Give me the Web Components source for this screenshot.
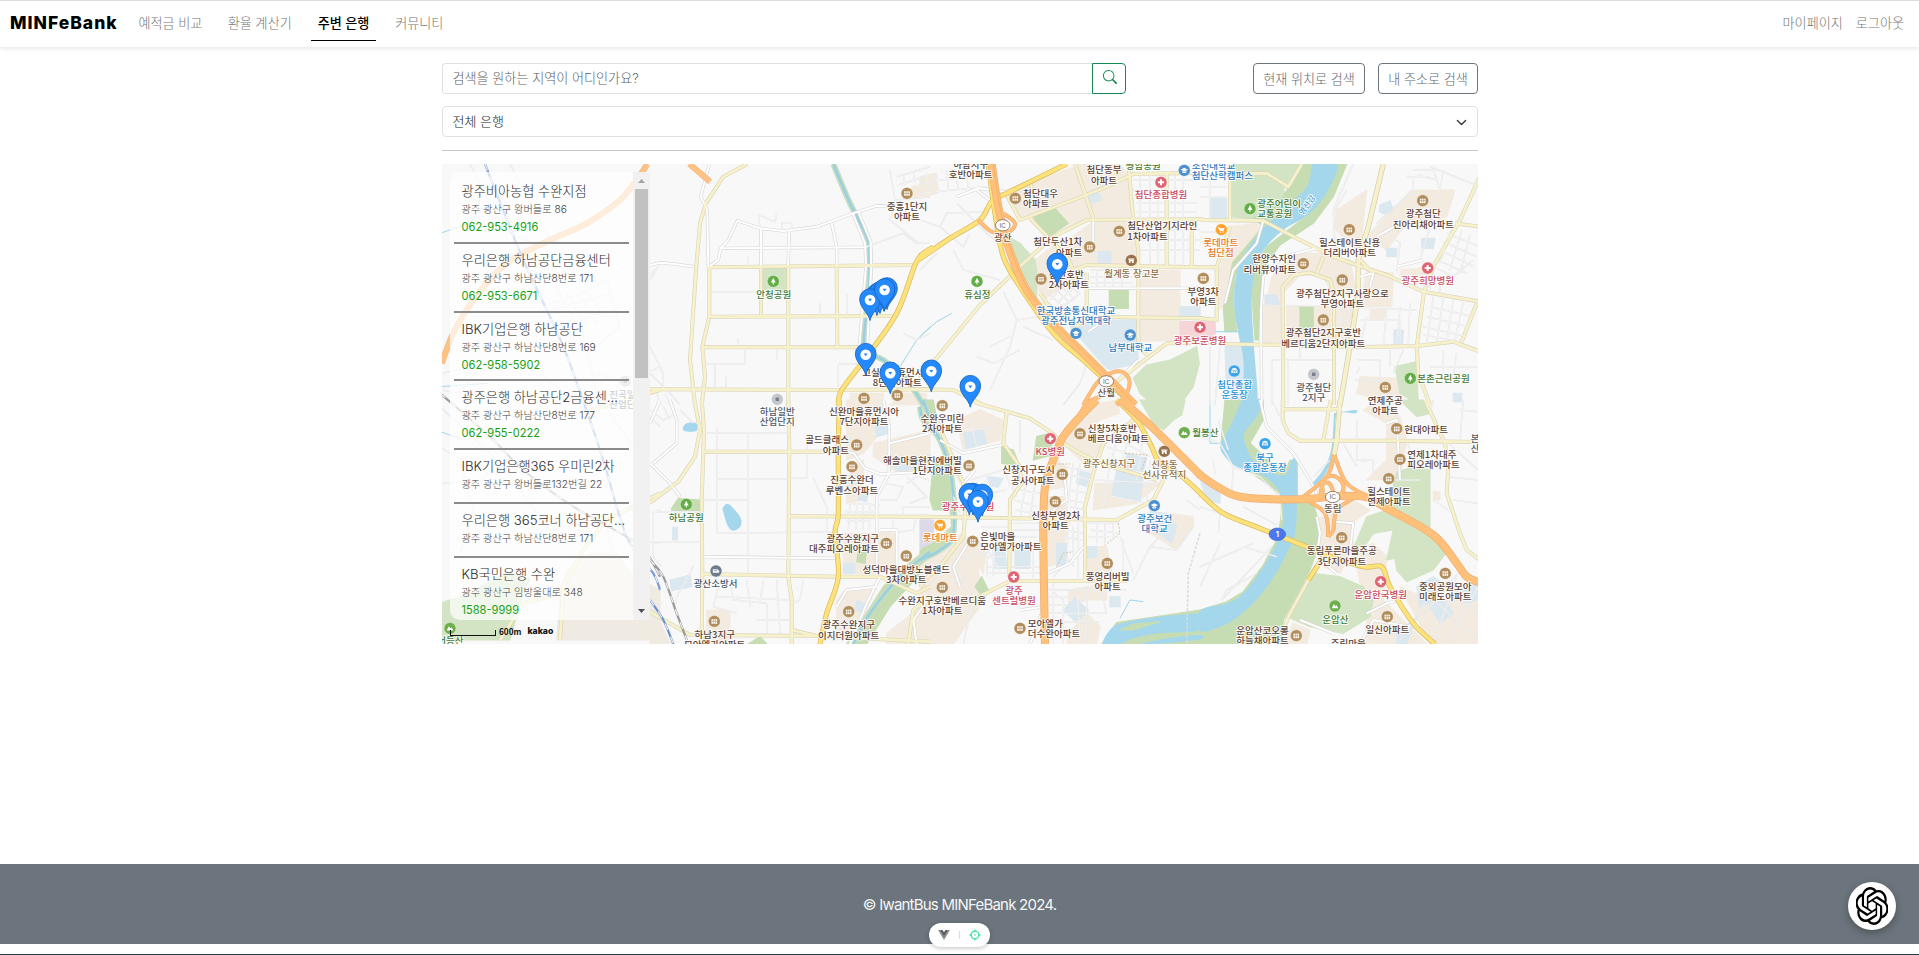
<!DOCTYPE html>
<html lang="ko">
<head>
<meta charset="utf-8">
<title>MINFeBank</title>
<style>
html,body{margin:0;height:100%}
body{font-family:Inter,"Noto Sans CJK KR",sans-serif;font-size:13px;color:#212529;background:#fff;overflow:hidden}
</style>
</head>
<body>
<bank-app></bank-app>
<script>
function define(name, html, setup, connected) {
  const t = document.createElement('template');
  t.innerHTML = html;
  customElements.define(name, class extends HTMLElement {
    constructor() {
      super();
      this.attachShadow({mode: 'open'}).append(t.content.cloneNode(true));
      if (setup) setup(this.shadowRoot);
    }
    connectedCallback() {
      if (connected) connected(this.shadowRoot, this);
    }
  });
}

define('nav-link', `<style>
:host{display:flex;align-items:center;justify-content:center;box-sizing:border-box;height:37px;padding:0 6px;color:#757575;font-weight:300;font-size:13.1px;white-space:nowrap;border-bottom:1px solid transparent}
:host([active]){color:#000;font-weight:500;border-bottom-color:#000;padding:0 6.500px}
</style><span><slot></slot></span>`);

define('top-nav', `<style>
:host{display:flex;align-items:flex-start;box-sizing:border-box;height:47px;border-top:1px solid #dcdcdc;padding:3px 9px 0 10px;background:#fff;box-shadow:0 2px 4px rgba(0,0,0,.09)}
.brand{font:800 17.500px/38px Inter,sans-serif;color:#000;width:109px;margin-right:13.500px;white-space:nowrap;letter-spacing:1px}
nav{display:flex;gap:13.4px}
.user{margin-left:auto;gap:1px}
</style>
<div class="brand">MINFeBank</div>
<nav><nav-link>예적금 비교</nav-link><nav-link>환율 계산기</nav-link><nav-link active>주변 은행</nav-link><nav-link>커뮤니티</nav-link></nav>
<nav class="user"><nav-link>마이페이지</nav-link><nav-link>로그아웃</nav-link></nav>`);

define('outline-button', `<style>
:host{display:flex;align-items:center;justify-content:center;box-sizing:border-box;height:31px;padding:0 10px 1px;border:1px solid #6c757d;border-radius:4px;color:#5f6870;font-weight:300;font-size:13.1px;white-space:nowrap}
</style><slot></slot>`);

define('search-row', `<style>
:host{display:flex;align-items:center;height:31px}
.field{display:flex;width:684px;height:31px;box-sizing:border-box}
.input{flex:1;box-sizing:border-box;border:1px solid #dee2e6;border-right:0;border-radius:4px 0 0 4px;padding-left:9.500px;line-height:28px;color:#5d6267;font-weight:300;font-size:13.1px}
.go{box-sizing:border-box;width:34px;border:1px solid #198754;border-radius:0 4px 4px 0;display:flex;justify-content:center;padding:6px 0 0 1px}
outline-button:nth-of-type(1){margin-left:auto;margin-right:13px;width:112px}
outline-button:nth-of-type(2){width:100px}
</style>
<div class="field"><div class="input">검색을 원하는 지역이 어디인가요?</div>
<div class="go"><svg width="14" height="14" viewBox="0 0 16 16" fill="#198754"><path d="M11.742 10.344a6.5 6.5 0 1 0-1.397 1.398h-.001q.044.06.098.115l3.85 3.85a1 1 0 0 0 1.415-1.414l-3.85-3.85a1 1 0 0 0-.115-.1zM12 6.5a5.5 5.5 0 1 1-11 0 5.5 5.5 0 0 1 11 0"/></svg></div></div>
<outline-button>현재 위치로 검색</outline-button><outline-button>내 주소로 검색</outline-button>`);

define('bank-select', `<style>
:host{display:flex;align-items:center;justify-content:space-between;box-sizing:border-box;height:31px;border:1px solid #dee2e6;border-radius:4px;padding:0 10px 2px 9.500px;font-weight:300;font-size:13px;margin-top:12px}
</style><slot></slot><svg width="11" height="11" viewBox="0 0 16 16" style="margin-top:4px"><path d="m2 5 6 6 6-6" fill="none" stroke="#343a40" stroke-width="2" stroke-linecap="round" stroke-linejoin="round"/></svg>`);

define('bank-item', `<style>
:host{display:block;box-sizing:border-box;border-bottom:2px solid #8b8b8b;padding:6px 0 0 7.500px;height:54px;font-weight:300;white-space:nowrap}
:host([tel]){height:68.8px}
.t{font-size:13.2px;line-height:20px;color:#2c2c2c}
.a{font-size:10.2px;line-height:17px;color:#444}
.p{font-size:11.1px;line-height:18px;color:#16a016;font-weight:400}
</style><div class="t"><slot></slot></div><div class="a"></div><div class="p"></div>`, null, (root, el) => {
  root.querySelector('.a').textContent = el.getAttribute('addr');
  root.querySelector('.p').textContent = el.getAttribute('tel') || '';
});

define('bank-list', `<style>
:host{display:flex;width:200px;height:448px;border-radius:10px 0 0 10px;background:rgba(255,255,255,.7);overflow:hidden}
.items{flex:1;padding:3px 4px 0;overflow:hidden}
.bar{width:17px;background:#f1f1f1;display:flex;flex-direction:column;align-items:center}
.thumb{width:13px;height:189px;background:#c1c1c1}
.bar svg{height:17px;width:17px;flex:none}
.down{margin-top:auto}
</style>
<div class="items">
<bank-item addr="광주 광산구 왕버들로 86" tel="062-953-4916">광주비아농협 수완지점</bank-item>
<bank-item addr="광주 광산구 하남산단8번로 171" tel="062-953-6671">우리은행 하남공단금융센터</bank-item>
<bank-item addr="광주 광산구 하남산단8번로 169" tel="062-958-5902">IBK기업은행 하남공단</bank-item>
<bank-item addr="광주 광산구 하남산단8번로 177" tel="062-955-0222">광주은행 하남공단2금융센...</bank-item>
<bank-item addr="광주 광산구 왕버들로132번길 22">IBK기업은행365 우미린2차</bank-item>
<bank-item addr="광주 광산구 하남산단8번로 171">우리은행 365코너 하남공단...</bank-item>
<bank-item addr="광주 광산구 임방울대로 348" tel="1588-9999">KB국민은행 수완</bank-item>
</div>
<div class="bar"><svg viewBox="0 0 17 17"><path d="M5 11 8.500 7 12 11z" fill="#a3a3a3"/></svg><div class="thumb"></div><svg class="down" viewBox="0 0 17 17"><path d="M5 6 8.500 10 12 6z" fill="#505050"/></svg></div>`);

/* Sheet origins: every shape below is given in thirds of a pixel from the origin of its sheet. */
const SHEET = {L: [440,160], A: [650,160], B: [920,160], C: [1200,160], D: [650,400], E: [920,400], F: [1200,400]};
const pt = (s, x, y) => [+(SHEET[s][0] + x / 3).toFixed(1), +(SHEET[s][1] + y / 3).toFixed(1)];
const list = (s, str) => str.trim().split(/\s+/).map(p => pt(s, ...p.split(',').map(Number)));
const pts = (s, str) => list(s, str).map(p => p.join(',')).join(' ');
function curve(s, str) {
  const p = list(s, str);
  let d = 'M' + p[0];
  for (let i = 0; i < p.length - 1; i++) {
    const a = p[i - 1] || p[i], b = p[i], c = p[i + 1], e = p[i + 2] || c;
    d += `C${(b[0] + (c[0] - a[0]) / 6).toFixed(1)},${(b[1] + (c[1] - a[1]) / 6).toFixed(1)} ${(c[0] - (e[0] - b[0]) / 6).toFixed(1)},${(c[1] - (e[1] - b[1]) / 6).toFixed(1)} ${c}`;
  }
  return d;
}

const AREAS = `
b B 255,90 460,22 620,40 640,175 500,180 400,230 330,165 300,180
b B 0,50 50,40 50,100 0,115
b B 430,250 520,185 650,180 655,310 500,310 460,330
b B 345,300 410,250 470,330 500,340 400,400 370,420 345,370
b B 655,330 780,330 780,540 660,545
b B 460,12 600,12 620,40 560,80
g B 255,225 300,250 345,300 350,330 350,420 290,370 270,300
k B 340,170 400,140 445,190 380,235
k B 568,390 625,390 625,445 568,445
s B 450,500 490,480 650,480 655,610 570,628 560,625
s B 500,100 530,85 545,120 515,130
s B 500,12 535,12 530,30
s B 535,275 572,275 572,310 535,310
s B 780,440 840,440 840,475 780,475
p B 780,485 885,485 885,520 780,545
g B 640,655 680,615 750,600 830,560 838,610 820,680 780,735 700,735 660,700
g E 660,0 795,0 785,45 760,60 730,90 700,70
g C 90,12 300,12 250,90 265,120 180,180 95,170
k C 300,12 345,12 330,80 250,150 190,205 135,280 105,350 100,420 110,515 75,515 70,440 80,370 100,300 150,240 190,200 160,175 250,110
k C 405,12 440,12 400,110 340,190 240,255 200,310 180,400 175,540 165,540 155,400 165,320 200,260 330,160
b C 90,200 170,190 180,205 100,300 60,330
b C 60,450 55,330 95,300 75,420
b C 205,400 215,350 290,280 360,280 450,300 470,400 400,410 370,350 300,345 250,400 245,550 190,550 190,440
b C 260,440 460,440 450,560 260,550
b C 410,150 500,90 480,290 400,200
b C 635,90 765,90 740,170 690,190 620,190 560,270 500,230
b C 500,330 580,340 575,440 480,440
b C 600,330 700,320 680,380 600,350
b C 510,450 560,450 550,480 510,475
b C 480,650 600,655 600,735 470,700
k C 300,440 340,440 340,510 300,510
g C 585,620 650,605 655,735 600,700
s C 30,115 80,115 80,175 30,175
s C 195,405 230,405 240,435 195,435
s C 540,135 570,122 580,150 560,165 538,155
s C 560,265 590,265 590,290 560,290
s C 665,235 705,235 700,265 665,265
s C 582,510 610,510 608,550 582,550
s C 760,700 785,700 785,725 760,725
s C 75,560 130,560 135,735 80,735
p C 0,485 45,485 45,550 0,550
g A 337,325 412,325 412,395 337,395
b A 785,80 830,70 840,110 790,115
b A 600,700 700,700 700,735 600,735
b D 590,0 700,0 690,100 640,160 590,180
b D 670,130 840,90 840,210 740,215 670,170
b D 710,700 840,600 840,732 710,732
b A 760,700 830,700 830,735 720,735
b D 590,230 640,180 640,300 590,310
b D 580,400 660,400 740,395 740,500 690,520 580,520
b D 560,600 590,565 680,560 640,650 560,720
b D 170,630 240,630 240,732 170,732
k D 65,325 85,295 150,300 150,335 65,332
k D 295,732 330,710 350,732
k D 625,455 650,450 645,490 620,485
s D 60,540 120,525 125,560 65,572
s D 68,382 82,382 82,420 68,420
s D 580,490 615,490 615,520 580,520
s D 620,600 650,615 640,640 615,630
s D 625,280 655,275 650,305 625,300
s D 675,80 720,70 715,100 680,110
s D 720,180 840,165 840,205 740,212
v D 815,360 840,360 840,445 815,445
v E 0,360 40,360 40,430 0,445
k D 840,440 740,520 700,560 590,732 650,732 720,620 840,490
k E 40,180 95,160 110,330 95,400 60,470 0,500 0,450 40,430 95,380 90,330 40,330 30,300
k E 0,0 40,0 50,60 30,60
b E 110,60 180,30 250,60 240,120 130,150
b E 40,90 20,60 60,120 120,200 120,250 70,160
b E 0,500 90,420 130,400 170,460 180,560 200,590 100,732 0,732
b E 380,290 430,290 450,360 420,490 380,500
b E 390,170 440,200 440,260 385,270
b E 510,80 560,130 510,210 430,130 470,60 540,10 590,0 600,40 540,60
b E 525,250 720,250 650,310 520,330
b E 500,440 560,440 580,540 500,540
b E 445,570 560,550 560,600 500,600 445,620
b E 455,690 500,640 540,680 530,732 440,732
b E 740,340 820,350 820,380 770,450 690,400
b E 160,420 200,430 190,520 160,480
k E 350,110 390,100 400,165 340,180
k E 245,140 280,150 300,200 245,190
k E 165,560 185,530 205,570 180,580
s E 130,100 190,90 200,130 140,145
s E 590,210 670,230 660,305 575,285
s E 620,160 680,175 670,215 610,205
s E 475,205 510,220 500,260 470,250
s E 205,230 250,235 235,262 210,258
s E 225,445 255,445 260,505 225,505
s E 285,450 330,450 330,505 285,505
s E 410,430 440,430 440,495 410,495
s E 500,440 530,440 530,470 500,475
s E 465,595 505,630 470,668 430,630
s E 570,590 600,590 600,620 570,620
s E 690,335 740,340 770,380 755,430 700,390
k E 545,732 590,668 840,630 840,732
b F 350,360 460,300 510,330 455,370 460,440 420,520 370,500
b F 490,30 540,0 600,50 620,120 600,240 560,240 500,240 560,180 560,70
b F 460,450 520,430 560,470 550,600 680,732 500,732 500,650
b F 600,560 690,600 700,640 760,560 834,600 834,732 690,732
b F 700,275 720,275 720,300 700,300
b F 280,670 330,690 320,732 250,732
g F 590,215 640,200 690,210 690,400 720,420 745,450 700,510 620,545 590,510 585,475 560,480 580,390 520,400 500,430 458,450 500,350 560,330
g F 600,0 670,0 690,40 650,50
g F 300,560 340,520 420,530 490,560 520,600 510,650 430,700 330,680 260,650
s F 650,560 700,530 740,560 720,600 660,620
s F 690,620 730,590 760,640 720,670
s F 0,240 60,270 60,310 20,300
s F 590,700 650,650 620,732 590,732
s F 770,560 834,540 834,600 790,610
k F 75,0 190,0 190,60 150,130 215,190 255,215 270,180 292,180 292,290 340,310 355,360 355,440 330,510 270,620 250,660 245,732 0,732 0,630 80,605 130,575 190,495 235,410 245,330 240,280 150,215 100,190 62,140
w C 335,12 412,12 385,90 330,160 250,210 195,265 165,330 155,420 160,530 165,600 172,735 135,735 130,600 115,520 103,440 108,350 135,280 190,205 250,150 320,80
w F 125,0 187,0 170,50 135,95 135,130 160,180 210,215 255,225 275,182 289,182 291,300 285,400 255,470 215,540 160,610 100,660 50,685 0,692 0,632 80,610 130,580 190,500 230,430 250,360 240,280 200,235 160,215 110,200 75,170 62,135 95,70
w F 402,40 465,30 465,40 410,45 405,140 380,215 345,255 338,250 375,200 395,140
w E 840,640 720,650 610,668 570,690 550,732 600,732 640,715 720,700 840,690
k E 600,690 640,672 720,665 640,690
w E 660,732 740,715 840,705 840,718 740,730
w D 217,325 235,312 270,350 272,378 250,392 232,375
w D 98,82 110,70 137,68 140,92 105,94
g L 0,1330 90,1300 200,1235 270,1255 240,1330 210,1440 0,1440
t L 360,1290 385,1225 450,1180 530,1180 570,1240 660,1290 660,1440 350,1440
t D 0,600 60,732 0,732
`;

const ROADS = `
n A 295,290 295,320
n A 330,205 325,165 375,185 380,160
n A 395,213 395,190 425,190 425,213
n A 180,395 330,395
n A 265,535 265,560
n A 510,430 510,468
n A 590,400 590,468
n A 285,570 285,612 165,612
n A 195,615 195,690
n A 380,570 380,600
n A 228,650 228,690
n A 565,615 565,690
n A 565,612 640,612
n A 0,560 40,640 40,690
n A 0,345 20,325
n A 720,30 735,120 840,110
n A 740,50 840,20
n A 745,75 840,45
n A 760,45 765,75
n A 790,35 795,68
n A 650,260 760,220 800,250 840,250
n A 730,150 720,180 800,245
n A 760,520 800,540 840,520
n A 0,640 60,700 90,735
n A 20,700 30,735
n A 45,700 60,735
n D 162,98 415,100
n D 200,85 200,400
n D 295,100 295,520
n D 200,237 415,237
n D 162,300 295,300
n D 200,400 555,396
n D 470,100 470,235 415,235
n D 490,235 530,320 530,396
n D 10,335 155,335
n D 10,335 10,470 35,500
n D 0,425 160,425
n D 210,540 190,620 260,640
n D 240,540 250,600 350,610
n D 290,540 300,620
n D 340,540 330,610
n D 200,590 420,600
n D 350,610 350,700
n D 380,540 390,700
n D 320,660 420,660
n D 460,540 450,600 425,610
n D 0,30 40,60 80,40
n D 0,50 30,80
n D 40,20 60,60
n D 90,30 130,70
n D 130,500 80,590 75,620
n D 585,310 690,315
n D 585,335 680,335
n D 600,310 595,390
n D 620,310 618,390
n D 640,310 638,390
n D 660,310 658,390
n D 590,362 660,362
n D 700,250 760,260 740,300 690,300
n D 770,250 800,230 840,240
n D 760,350 760,320 840,320
n D 800,350 790,390 720,400
n D 730,360 730,400
n D 770,230 830,290 780,310
n B 0,70 170,45
n B 0,100 200,80
n B 20,40 30,100
n B 50,45 55,100
n B 80,30 85,90
n B 110,60 115,85
n B 140,50 145,85
n B 0,180 60,200 80,160 190,155
n B 60,200 130,260 150,220
n B 100,270 130,330 240,360
n B 0,330 50,280
n B 110,130 200,220 250,260
n B 250,395 290,480 270,560 210,690
n B 290,480 350,470
n B 310,500 400,540
n B 210,560 270,530
n B 170,590 220,610 300,570
n B 500,610 480,670 430,735
n B 380,395 430,440 480,400 420,360
n B 400,380 450,430
n B 415,370 465,420
n B 390,420 440,370
n B 410,430 460,385
n B 510,330 640,330
n B 510,350 640,350
n B 510,370 640,370
n B 530,330 530,380
n B 555,330 555,380
n B 580,330 580,380
n B 605,330 605,380
n B 640,60 840,60
n B 640,90 740,90
n B 660,45 660,175
n B 690,45 690,175
n B 715,120 715,175
n B 765,45 765,175
n B 790,45 790,320
n B 650,130 830,130
n B 650,155 830,155
n B 660,240 840,240
n B 660,270 840,270
n B 690,180 690,320
n B 715,180 715,320
n B 750,210 840,210
n B 765,190 765,310
n C 0,80 80,80
n C 0,110 80,110
n C 30,40 30,175
n C 0,215 50,215
n C 0,245 45,245
n C 60,560 45,735
n C 30,560 30,735
n C 440,90 400,160 405,260 450,290
n C 460,12 400,150
n C 640,50 640,90 530,190 600,250 590,340
n C 640,30 700,30 720,90
n C 655,45 710,60
n C 690,20 840,80
n C 730,30 720,90
n C 620,50 690,50
n C 700,320 760,350 820,300
n C 660,300 690,200 740,190
n C 740,220 840,260
n C 730,245 830,290
n C 720,270 820,320
n C 710,300 800,340
n C 755,200 720,310
n C 785,210 750,330
n C 810,225 780,340
n C 690,340 690,390
n C 720,350 720,400
n C 690,440 820,470
n C 680,470 810,500
n C 670,500 800,530
n C 670,525 780,545
n C 700,410 680,550
n C 730,415 710,550
n C 760,420 740,545
n C 790,425 765,540
n C 600,440 590,550
n C 630,430 625,550
n C 480,445 650,450
n C 480,480 600,480 600,550
n C 500,470 480,560
n C 560,450 550,560
n C 570,570 570,620
n C 610,570 580,640
n C 470,600 540,600 540,660 465,660
n C 480,620 470,640
n C 730,570 730,640
n C 690,620 834,620
n C 700,660 770,650
n C 770,580 760,650
n C 215,600 395,600
n C 215,600 215,735
n C 265,600 265,735
n C 300,560 300,600
n C 430,450 470,450
n C 410,480 460,480
n C 405,510 455,510
n C 420,530 450,530
n C 420,440 415,500
n C 185,435 460,440
n F 215,0 240,50
n F 470,60 470,180 500,185
n F 520,225 520,180 480,180
n F 55,60 85,150
n F 0,110 60,130 100,200 95,280
n F 100,200 180,230 240,290 245,360
n F 130,320 230,375
n F 0,320 60,340 55,400
n F 60,430 0,560
n F 0,500 160,430
n F 65,600 215,440
n F 65,600 80,570 170,520
n F 130,440 230,470
n F 620,120 640,180
n F 690,40 700,0
n F 735,120 840,215
n F 740,230 834,240
n F 760,300 834,310
n F 780,30 834,35
n F 780,120 790,0
n F 470,200 430,130
n F 700,300 745,330
n F 340,230 390,180
n F 640,670 700,610 790,500
n F 690,590 834,720
n F 730,560 834,640
n F 600,720 680,600
n F 770,530 700,732
n F 834,560 740,732
n F 560,240 660,240
n F 40,180 45,220
n E 280,370 360,370
n E 280,390 360,390
n E 280,410 350,410
n E 280,430 350,430
n E 185,380 265,380
n E 200,430 260,430
n E 200,445 200,530
n E 220,440 220,530
n E 200,470 260,470
n E 200,500 360,500
n E 200,520 360,520
n E 340,440 340,540
n E 180,410 240,510
n E 285,300 350,320
n E 285,330 350,340
n E 300,270 360,280
n E 320,240 300,350
n E 345,250 330,350
n E 150,240 250,210 290,290
n E 140,270 210,280 260,270
n E 200,220 200,280
n E 300,60 300,160
n E 380,560 430,600 430,732
n E 400,550 400,732
n E 385,570 620,570
n E 385,590 460,590
n E 385,615 440,615
n E 385,640 560,640
n E 385,665 540,665
n E 500,560 500,732
n E 470,560 480,700
n E 540,560 560,640
n E 430,390 490,400
n E 430,410 490,420
n E 445,380 440,500
n E 460,380 460,500
n E 475,370 475,540
n E 400,530 490,440
n E 505,370 600,370
n E 510,390 600,400
n E 505,410 570,410
n E 530,370 530,430
n E 555,370 555,430
n E 580,370 580,410
n E 440,200 520,220
n E 450,225 515,240
n E 430,270 510,280
n E 440,300 500,310
n E 450,320 500,330
n E 460,190 440,330
n E 480,190 465,340
n E 600,90 700,140
n E 580,110 690,170
n E 560,140 620,160
n E 600,80 570,200
n E 640,70 600,200
n E 670,110 650,240
n E 570,190 550,320
n E 520,240 720,250
n E 690,180 680,310
n E 530,280 680,310
n E 610,420 610,540
n E 640,520 600,410
n E 730,400 690,440 770,450 820,380
n E 800,300 840,330
n E 690,440 640,540
n E 100,290 120,340
n E 130,90 240,80
n E 150,60 170,140
n E 130,480 210,450
n E 110,500 160,600 130,732
n E 60,560 110,650
n E 0,620 150,630
n L 0,690 60,700 120,620 0,640
n L 90,12 190,210 300,260
n L 210,12 330,240
n L 330,430 430,400 500,360 540,500 470,560
n L 350,380 400,480
n L 380,400 440,500
n L 420,410 470,490
n L 450,400 490,470
n L 330,450 520,400
n L 360,500 540,440
n L 430,520 470,700 580,860
n L 470,640 580,680
n L 0,740 170,900 130,960 0,970
n L 300,640 480,780
n L 200,940 330,1110 500,1080
n L 290,1080 450,1120
n L 0,860 60,900 100,1050 60,1180
n L 500,1100 520,1180
n L 600,650 660,620
n L 630,360 660,310
n L 635,1060 660,1050
n L 635,1150 660,1150
h A 0,315 30,308 75,312 130,320
h A 175,322 205,300 212,265 235,240 262,182 330,205 400,213 500,200 610,160 680,137 720,140 770,160
h A 212,265 650,262
h A 333,205 333,322
h A 418,213 414,320
h A 545,190 560,262 560,320
h A 608,160 645,250 648,320 628,560
h A 625,155 662,245 664,320 652,560
h A 178,12 152,110 172,150 175,320
h D 162,470 555,475
h D 0,70 30,0
h D 10,190 80,130 80,60 60,0
h D 0,190 60,250 90,290
h D 565,155 610,158 645,205 690,222 840,215
h D 718,80 718,220 680,290 680,530
h D 690,530 650,610 600,732
h D 560,620 590,570 680,560
h D 840,100 720,130
h D 700,0 718,80
h D 800,732 790,660 840,590
h D 690,390 740,390 740,500
h B 110,110 175,85 255,95
h B 170,90 215,125
h B 520,175 520,280
h B 505,385 840,385
h B 505,515 540,490
h B 655,600 590,665
h C 190,182 170,250 100,330 75,430
h C 185,735 183,450 190,350 250,290 350,265
h C 530,230 600,190
h C 480,350 520,340 510,380
h C 590,320 670,300
h E 60,120 130,160 245,135
h E 165,210 130,250
h E 435,240 440,300 400,330
h E 370,525 450,490 490,440
h E 150,420 100,500 120,560
h E 300,630 372,620
h E 372,620 330,732
h F 180,0 200,80 280,160 330,240 350,280
h F 350,350 360,400 350,470 410,520
h F 405,365 460,370 450,450
h F 300,660 400,700
h F 560,70 590,60 600,240
h F 500,640 560,610 600,600
h F 480,732 520,660 630,680
c A 292,12 220,50 168,130 150,190 138,330 120,600 135,735
c A 175,322 790,315
c A 178,322 178,470 157,560 165,650 155,735
c A 333,322 333,470
c A 415,322 415,735
c A 560,322 562,560
c A 178,470 730,468
c A 157,562 640,562
c A 0,688 570,690 850,688
c D 135,10 150,90 135,170 85,245 0,308
c D 155,0 162,90 155,300 157,520 155,732
c D 415,0 418,150 415,530 425,600 425,732
c D 162,155 565,155
c D 415,349 840,350
c D 155,522 560,530 690,530 800,580 840,560
c D 0,635 120,705 500,708 840,725
c D 425,690 500,708
c D 840,590 790,630 775,732
c B 0,655 180,435 260,358 310,310 400,230 500,180 850,178
c B 255,95 300,180 460,120 560,80 640,42 850,38
c B 465,12 520,175
c B 625,12 640,178 655,270 655,550 680,585
c B 740,40 740,320
c B 815,180 815,320
c B 460,330 500,315 840,322
c B 330,175 440,290 460,330
c B 500,340 500,470 850,475
c B 500,470 470,500
c B 0,688 100,690 190,735
c B 590,665 740,550 850,548
c B 330,70 345,110
c B 360,400 380,430 470,500
c C 90,12 90,180
c C 0,180 190,182 300,240 400,290 470,315 560,345 670,395 840,425
c C 90,40 200,40 265,80 305,12
c C 0,322 50,322 90,200
c C 50,322 50,480 0,475
c C 75,552 250,555 450,562 650,558 760,545 840,575
c C 250,735 248,380 280,345 330,338 390,360 402,400 402,735
c C 370,290 350,340
c C 840,50 780,180 700,320 672,395 650,560 655,640 690,735
c C 765,190 840,200
c C 830,430 785,545
c C 480,300 520,340
C C 550,12 505,200 475,300 475,400 450,560 420,735
c E 165,8 260,35 330,55 390,95 430,130 480,160 540,190 710,240
c E 260,35 250,130 300,200 305,250 270,300 268,530
c E 0,350 590,360 700,300 730,240
c E 640,60 550,130 520,220 495,320 495,540
c E 270,543 620,543
c E 135,350 130,410 60,500 0,550
c E 265,545 140,610
c E 50,60 130,250 135,350
c E 0,560 20,540
c F 248,0 248,60 265,100 300,122 560,122 840,126
c F 392,0 370,120
c F 248,28 425,28
c F 675,0 735,130 745,200 740,280 780,400 800,450 840,480
c F 370,470 325,540 270,640 255,675
C F 420,0 410,120 400,180
c L 660,1000 500,1080 430,1170 370,1280 360,1440
c L 420,760 660,690
c L 180,1440 250,1330 400,1290
y A 850,262 820,280 795,315 740,460 650,590 575,690 565,735
y B -5,300 90,235 180,180 215,125 270,95 440,12
y D 568,0 565,150 565,340 555,400 565,530 530,640 510,732
y B 205,12 225,160 250,290 300,380 400,520 500,610 600,700 640,735
y E 590,0 650,60 690,130 720,190 780,225 845,283
y F 0,280 70,340 180,385 320,440 380,465 490,500 545,500 570,560 640,670 705,732
y F 385,440 370,470 325,540
r B 175,180 215,215 260,220 285,190 250,160
r B 490,735 530,670 570,640 605,635 628,660 620,700 590,735
r E 470,60 500,10 540,-10
r F 403,165 440,250 510,292
r F 403,165 380,230 310,290
r F 320,300 375,340 385,410
r F 460,295 410,330 400,390 385,410
r F 350,295 368,275 366,255 385,248 398,270 398,290
r F 360,290 372,240 400,228 425,245 430,270 415,292
o A 118,12 180,65
O B 215,12 235,140 265,260 320,390 400,490 480,570 560,650 645,735
O E 530,0 480,50 430,110 400,180 375,260 370,400 375,732
O E 600,-3 700,85 845,229
O F -5,221 60,265 130,292 300,298 420,288 500,292 560,325 700,405 770,490 800,530 840,548
o L 622,12 590,60 540,120 440,190 330,240 200,310 100,420 40,520 5,610
`;
const STYLE = { // casing colour, casing width, fill colour, fill width
  n: ['#e2e2e3', 1.5, '#fdfdfd', .6], h: ['#d5d5d6', 3.2, '#fff', 2], c: ['#d9d4b8', 4, '#f6f1cb', 2.8], C: ['#d2cdb0', 5.4, '#f6f1cb', 4],
  y: ['#d8bb60', 5.2, '#fde17b', 3.8], r: ['#eda968', 4, '#ffbf7a', 3], o: ['#efb27c', 6, '#ffc285', 5], O: ['#efae72', 8, '#ffc07a', 6.600]
};
const FILL = {b: '#f3ebe0', g: '#d3e4c4', k: '#c6ddb3', s: '#dbe8f0', p: '#f5d5d8', w: '#a4d7ec', t: '#f0ebe2', v: '#dcdae8'};

/* sheet | icon | icon x,y | anchor | text x,y | lines | colour */
const LABELS = `
A|apt|771,100|m|771,139|중흥1단지/아파트
A|park|370,364|m|371,404|안청공원
A|apt|742,706|m|742,636|고실마을휴먼시아/8단지아파트
D|dot|382,-2|m|382,34|하남일반/산업단지
A|apt|642,715|m|642,754|신완마을휴먼시아/7단지아파트
B||0,0|m|152,12|하남지구/호반아파트|apt
B|apt|286,115|s|309,99|첨단대우/아파트
B||0,0|m|552,29|첨단동부/아파트|apt
B||0,0|m|670,17|쌍암공원|park
B|school|793,31|s|815,15|조선대학교/첨단산학캠퍼스
B|hosp|723,67|m|723,104|첨단종합병원
B|apt|598,214|s|622,197|첨단산업기지라인/1차아파트
B|ic|248,196|m|248,231|광산
B|apt|509,261|e|487,245|첨단두산1차/아파트
B|apt|363,357|s|386,342|첨단호반/2차아파트
B|relic|634,301|m|635,341|월계동 장고분
B|park|171,364|m|172,404|휴심정
B|school|468,520|m|468,450|한국방송통신대학교/광주전남지역대학
B|school|631,525|m|631,562|남부대학교
C|apt|10,355|m|10,393|부영3차/아파트
C|hosp|0,502|m|0,541|광주보훈병원
B|ic|559,664|m|559,697|산월
C|park|150,146|s|172,130|광주어린이/교통공원
C|cart|64,209|m|62,247|롯데마트/첨단점
C|apt|668,122|m|670,161|광주첨단/진아리채아파트
C|apt|448,209|m|449,247|힐스테이트신용/더리버아파트
C|apt|310,311|e|288,296|한양수자인/리버뷰아파트
C|hosp|683,324|m|683,361|광주희망병원
C|apt|427,360|m|427,399|광주첨단2지구사랑으로/부영아파트
C|apt|370,480|m|370,518|광주첨단2지구호반/베르디움2단지아파트
C|arena|103,633|m|104,673|첨단종합/운동장
C|dot|341,643|m|341,681|광주첨단/2지구
C|park|631,655|s|652,656|본촌근린공원
C|apt|556,682|m|556,720|연제주공/아파트
F||0,0|s|812,115|본/산|dot
D|apt|620,135|e|597,119|골드클래스/아파트
D|apt|606,200|m|606,239|진흥수완더/루벤스아파트
D|park|109,313|m|109,352|하남공원
D|fire|198,513|m|197,550|광산소방서
D|apt|709,430|e|687,415|광주수완지구/대주피오레아파트
D|apt|769,468|m|769,508|성덕마을대방노블랜드/3차아파트
D|apt|193,664|m|194,703|하남3지구/모아엘가아파트
D|apt|596,635|m|596,674|광주수완지구/이지더원아파트
E|apt|67,17|m|67,55|수완우미린/2차아파트
E|apt|147,197|e|125,181|해솔마을현진에버빌/1단지아파트
E|hosp|391,116|m|391,154|KS병원
E|apt|480,101|s|503,85|신창5차호반/베르디움아파트
E||0,0|m|567,190|광주신창지구|relic
E|relic|733,154|m|733,193|신창동/선사유적지
E|apt|427,223|e|404,209|신창지구도시/공사아파트
E|apt|406,305|m|407,345|신창부영2차/아파트
E||0,0|m|144,318|광주수완병원|hosp
E|cart|60,376|m|61,413|롯데마트
E|apt|158,424|s|181,408|은빛마을/모아엘가아파트
E|school|703,317|m|704,355|광주보건/대학교
E|hosp|281,531|m|282,571|광주/센트럴병원
E|apt|562,490|m|563,529|풍영리버빌/아파트
E|apt|67,562|m|67,601|수완지구호반베르디움/1차아파트
E|apt|300,685|s|323,669|모아엘가/더수완아파트
E|mount|793,98|s|817,97|월봉산
F|arena|195,131|m|195,171|북구/종합운동장
F|apt|590,86|s|613,87|현대아파트
F|apt|600,178|s|622,162|연제1차대주/피오레아파트
F|apt|566,236|m|567,274|힐스테이트/연제아파트
F|ic|398,291|m|398,324|동림
F|apt|425,413|m|425,452|동림푸른마을주공/3단지아파트
F|hosp|542,545|m|542,584|운암한국병원
F|apt|736,520|m|736,558|중외공원모아/미래도아파트
F|mount|405,618|m|406,657|운암산
F|apt|562,650|m|562,687|일신아파트
F|apt|289,707|e|266,691|운암산코오롱/하늘채아파트
F||0,0|m|445,730|주림마을|apt
L|dot|556,664|s|508,702|진곡일반/산업단지
L|mount|30,1405|m|31,1441|어등산
`;
const INK = {apt: '#5a3f33', park: '#3f7a34', mount: '#3f7a34', dot: '#4c5a66', school: '#2f78bd', hosp: '#c9485e', ic: '#6b5040', relic: '#8f7047', cart: '#e8791c', arena: '#2590d8', fire: '#46566a'};
const DISC = {apt: '#b18d5c', park: '#62ad45', mount: '#6fae4d', school: '#4c91cf', hosp: '#df6473', relic: '#97714a', cart: '#ffa32b', arena: '#3ba4ea', fire: '#6c7a8a', dot: '#c3c7cb'};
const GLYPH = {
  apt: '<path d="M-2.800-2.100H2.800V2.500H-2.800z" fill="#fff"/><path d="M-1-2.600V2.500M1-2.600V2.500M-2.800 0H2.800" stroke="#b18d5c" stroke-width=".6"/>',
  park: '<path d="M0-3.600 2.400 1.200H-2.400zM-.5 1H.5V3.200H-.5z" fill="#fff"/>',
  mount: '<path d="M-3.400 2.200-1-2 .4.200 1.400-1 3.400 2.200z" fill="#fff"/>',
  school: '<path d="M-3.700-.6 0-2.500 3.700-.6 0 1.200z" fill="#fff"/><path d="M-2 .8V2.200Q0 3.300 2 2.200V.8L0 1.800z" fill="#fff"/>',
  hosp: '<path d="M-1-3H1V-1H3V1H1V3H-1V1H-3V-1H-1z" fill="#fff"/>',
  relic: '<path d="M-3-1.800H3V-.6H-3zM-2.400-.3H2.400V2.700H.8V1H-.8V2.700H-2.400z" fill="#fff"/>',
  cart: '<path d="M-3.500-2.600H-2.200L-1.800-1.600H3.200L2.200 1.200H-1.500z" fill="#fff"/><circle cx="-.8" cy="2.400" r=".7" fill="#fff"/><circle cx="1.700" cy="2.400" r=".7" fill="#fff"/>',
  arena: '<path d="M-3 1.900V-.8Q-2.500-2.900 0-2.900T3-.8V1.900z" fill="#fff"/><path d="M-1.200 1.900V.2H1.200V1.900M-3-.7H3" stroke="#3ba4ea" stroke-width=".6" fill="none"/>',
  fire: '<path d="M-3.200-1.700H1.400L3.200.1V1.800H-3.200z" fill="#fff"/><path d="M-2.200-.3H1" stroke="#6c7a8a" stroke-width=".7"/>',
  dot: '<rect x="-1.700" y="-1.700" width="3.400" height="3.400" fill="#78818b"/>'
};
const PINS = [[877,295],[887,289],[880,293],[884,291],[870,300],[884.600,290],[865.700,354.700],[890.300,373.300],[931.300,371.300],[970.300,386.700],[1057.300,264.300],[973,494.500],[969.300,494.700],[982.300,495.500],[978,501.700]];

function drawMap() {
  let out = '<rect x="442" y="164" width="1036" height="480" fill="#f8f8f8"/>';
  for (const l of AREAS.trim().split('\n')) {
    const m = l.match(/^(\w) (\w) (.*)$/), f = FILL[m[1]];
    const p = m[3].split(' ');
    out += m[1] === 'w'
      ? `<path d="${curve(m[2], p.concat(p[0]).join(' '))}z" fill="${f}"/>`
      : `<polygon points="${pts(m[2], m[3])}" fill="${f}" stroke="${f}" stroke-width="1.200" stroke-linejoin="round"/>`;
  }
  const line = (s, p, c, w, x = '') => `<polyline points="${pts(s, p)}" fill="none" stroke="${c}" stroke-width="${w}" stroke-linejoin="round" ${x}/>`;
  const bend = (s, p, c, w, x = '') => `<path d="${curve(s, p)}" fill="none" stroke="${c}" stroke-width="${w}" stroke-linejoin="round" ${x}/>`;
  const stream = [['A','550,12 600,130 650,230 658,280 656,400 643,560 700,600 770,660 820,735'],['D','820,0 840,60'],['E','0,20 10,60 60,120 95,240 100,400 60,450 0,480'],['D','840,455 750,530 660,640 610,732']];
  for (const [s, p] of stream) out += bend(s, p, '#c6ddc0', 6);
  for (const [s, p] of stream) out += bend(s, p, '#98cfe2', 2.4);
  for (const [s, p] of [['L','0,680 145,670'],['L','0,815 60,835'],['L','0,220 90,190 130,140'],['A','840,500 800,540 750,620'],['B','0,530 50,485 95,460'],['E','600,655 630,600 670,605'],['C','45,515 130,515'],['F','30,0 30,130 70,130']]) out += line(s, p, '#9fd6ea', 1);
  const roads = ROADS.trim().split('\n').map(l => l.match(/^(\w) (\w) (.*)$/));
  for (const group of ['nhcC', 'y', 'roO'])
    for (const k of [0, 2])
      for (const t of group) for (const m of roads) if (m[1] === t) out += ('yroO'.includes(t) ? bend : line)(m[2], m[3], STYLE[t][k], STYLE[t][k + 1]);
  out += bend('B', '220,12 240,140 270,260 325,390 405,490 485,570 565,650 645,735', '#f5aa66', .8);
  for (const [s, p, c] of [['L','135,12 250,300 370,560 480,870 560,1130 640,1240 660,1290','#7a9bd6'],['D','0,600 40,660 70,732','#6f90cf'],['L','0,700 150,830 250,930 400,1040 560,1130 620,1180 660,1250','#9a9a9a'],['D','0,480 40,530 80,640 115,732','#9a9a9a']])
    out += bend(s, p, c, 2.200) + bend(s, p, '#f2f2f2', 1.200, 'stroke-dasharray="7 7"');
  for (const [s, p] of [['E','415,192 450,192'],['E','615,160 680,165 665,210'],['E','410,500 430,460 460,455'],['E','595,370 600,400 550,440']]) out += line(s, p, '#c9b691', .8, 'stroke-dasharray="2 1.500"');
  out += line('E', '840,400 805,520 800,732', '#dadada', 1.500, 'stroke-dasharray="3 1.500"');
  let icons = '', text = '';
  for (const l of LABELS.trim().split('\n')) {
    const [s, icon, ip, an, tp, str, col] = l.split('|');
    const kind = icon || col, [ix, iy] = pt(s, ...ip.split(',').map(Number)), [tx, ty] = pt(s, ...tp.split(',').map(Number));
    if (icon === 'ic') icons += `<g transform="translate(${ix} ${iy})"><ellipse rx="7.300" ry="5.600" fill="#fff" stroke="#8a7564" stroke-width=".9"/><text y="2.400" font-size="6.500" text-anchor="middle" fill="#776251">IC</text></g>`;
    else if (icon) icons += `<g transform="translate(${ix} ${iy})"><circle r="5.900" fill="${DISC[icon]}" stroke="#fff" stroke-opacity=".5" stroke-width=".6"/>${GLYPH[icon]}</g>`;
    str.split('/').forEach((w, i) => {
      text += `<text x="${tx}" y="${(ty + 3.500 + i * 10.300).toFixed(1)}" text-anchor="${{m: 'middle', s: 'start', e: 'end'}[an]}" fill="${INK[kind]}">${w}</text>`;
    });
  }
  out += icons + `<g class="lab">${text}<text transform="translate(1307 205) rotate(-56)" text-anchor="middle" y="3" font-size="8" fill="#5d9cc4">영산강</text></g>`;
  out += '<ellipse cx="1277.300" cy="534.300" rx="8.300" ry="6.300" fill="#4b78ee" stroke="#3a62cf" stroke-width=".6"/><text x="1277.300" y="537" font-size="7.500" font-weight="700" text-anchor="middle" fill="#fff">1</text>';
  for (const [x, y] of PINS) out += `<g transform="translate(${x} ${y})"><path d="M0 20.500C-1.500 12.500-10.300 8.200-10.300-1A10.300 10.300 0 0 1 10.300-1C10.300 8.200 1.500 12.500 0 20.500z" fill="#2489fb" stroke="#1766c4" stroke-width=".9"/><circle r="5.300" fill="#fff"/><path d="M-2-1.200H2L0 1.500z" fill="#2489fb"/></g>`;
  return out;
}

define('bank-map', `<style>
:host{display:block;position:relative;height:480px;overflow:hidden}
svg{display:block;width:100%;height:100%}
.lab{font:500 9.500px "Noto Sans CJK KR",sans-serif;paint-order:stroke;stroke:rgba(255,255,255,.85);stroke-width:1.800px;stroke-linejoin:round}
bank-list{position:absolute;left:8px;top:8px}
.scale{position:absolute;left:8px;bottom:8px;display:flex;align-items:flex-end;gap:3px;font:700 8.200px/9px "Noto Sans CJK KR",sans-serif;color:#111;height:11px}
.scale i{width:44px;height:5px;border:solid #111;border-width:0 1px 1px}
.scale b{margin-left:3px;font:800 8.700px/9px Inter,sans-serif}
</style><svg class="canvas" viewBox="442 164 1036 480"></svg><bank-list></bank-list><div class="scale"><i></i><span>600m</span><b>kakao</b></div>`,
  r => { r.querySelector('.canvas').innerHTML = drawMap(); });

define('site-footer', `<style>
:host{display:flex;align-items:center;justify-content:center;height:80px;background:#6c757d;color:#f4f5f6;font:400 15px Inter,sans-serif;letter-spacing:-.78px}
</style><slot></slot>`);

define('dev-pill', `<style>
:host{display:flex;align-items:center;justify-content:center;gap:9px;box-sizing:border-box;width:61px;height:24px;padding-right:1px;border-radius:12px;background:#fff;box-shadow:0 1px 5px rgba(0,0,0,.25)}
i{width:1px;height:8px;background:#ddd}
svg{display:block}
</style><svg width="12" height="10" viewBox="0 0 12 10"><path d="M0 0H4.400L6 2.700 7.600 0H12L6 10z" fill="#8f8f8f"/><path d="M2.400 0H4.400L6 2.700 7.600 0H9.600L6 6z" fill="#555"/></svg><i></i><svg width="12" height="12" viewBox="0 0 13 13" fill="none" stroke="#3fe3a2" stroke-width="1.400"><circle cx="6.500" cy="6.500" r="4.200"/><path d="M6.500.5V3M6.500 10V12.500M.5 6.500H3M10 6.500H12.500"/><circle cx="6.500" cy="6.500" r=".9" fill="#3fe3a2" stroke="none"/></svg>`);

define('chat-button', `<style>
:host{display:flex;align-items:center;justify-content:center;width:48px;height:48px;border-radius:50%;background:#fff;box-shadow:0 3px 8px rgba(0,0,0,.3)}
</style><svg width="32" height="38" viewBox="0.500 0 23 24" preserveAspectRatio="none"><path d="M22.2819 9.8211a5.9847 5.9847 0 0 0-.5157-4.9108 6.0462 6.0462 0 0 0-6.5098-2.9A6.0651 6.0651 0 0 0 4.9807 4.1818a5.9847 5.9847 0 0 0-3.9977 2.9 6.0462 6.0462 0 0 0 .7427 7.0966 5.98 5.98 0 0 0 .511 4.9107 6.051 6.051 0 0 0 6.5146 2.9001A5.9847 5.9847 0 0 0 13.2599 24a6.0557 6.0557 0 0 0 5.7718-4.2058 5.9894 5.9894 0 0 0 3.9977-2.9001 6.0557 6.0557 0 0 0-.7475-7.0729zm-9.022 12.6081a4.4755 4.4755 0 0 1-2.8764-1.0408l.1419-.0804 4.7783-2.7582a.7948.7948 0 0 0 .3927-.6813v-6.7369l2.02 1.1686a.071.071 0 0 1 .038.052v5.5826a4.504 4.504 0 0 1-4.4945 4.4944zm-9.6607-4.1254a4.4708 4.4708 0 0 1-.5346-3.0137l.142.0852 4.783 2.7582a.7712.7712 0 0 0 .7806 0l5.8428-3.3685v2.3324a.0804.0804 0 0 1-.0332.0615L9.74 19.9502a4.4992 4.4992 0 0 1-6.1408-1.6464zM2.3408 7.8956a4.485 4.485 0 0 1 2.3655-1.9728V11.6a.7664.7664 0 0 0 .3879.6765l5.8144 3.3543-2.0201 1.1685a.0757.0757 0 0 1-.071 0l-4.8303-2.7865A4.504 4.504 0 0 1 2.3408 7.872zm16.5963 3.8558L13.1038 8.364 15.1192 7.2a.0757.0757 0 0 1 .071 0l4.8303 2.7913a4.4944 4.4944 0 0 1-.6765 8.1042v-5.6772a.79.79 0 0 0-.407-.667zm2.0107-3.0231l-.142-.0852-4.7735-2.7818a.7759.7759 0 0 0-.7854 0L9.409 9.2297V6.8974a.0662.0662 0 0 1 .0284-.0615l4.8303-2.7866a4.4992 4.4992 0 0 1 6.6802 4.66zM8.3065 12.863l-2.02-1.1638a.0804.0804 0 0 1-.038-.0567V6.0742a4.4992 4.4992 0 0 1 7.3757-3.4537l-.142.0805L8.704 5.459a.7948.7948 0 0 0-.3927.6813zm1.0976-2.3654l2.602-1.4998 2.6069 1.4998v2.9994l-2.5974 1.4997-2.6067-1.4997Z"/></svg>`);

define('bank-app', `<style>
:host{display:flex;flex-direction:column;position:relative;box-sizing:border-box;height:955px;border-bottom:1px solid #203a48}
main{width:1036px;margin:16px auto 0 442px;flex:1}
hr{height:1px;border:0;background:#c5c6c8;margin:13px 0}
site-footer{margin-bottom:10px}
dev-pill{position:absolute;left:929px;top:923px}
chat-button{position:absolute;right:23px;top:882px}
</style>
<top-nav></top-nav>
<main><search-row></search-row><bank-select>전체 은행</bank-select><hr><bank-map></bank-map></main>
<site-footer>© IwantBus MINFeBank 2024.</site-footer>
<dev-pill></dev-pill><chat-button></chat-button>`);
</script>
</body>
</html>
